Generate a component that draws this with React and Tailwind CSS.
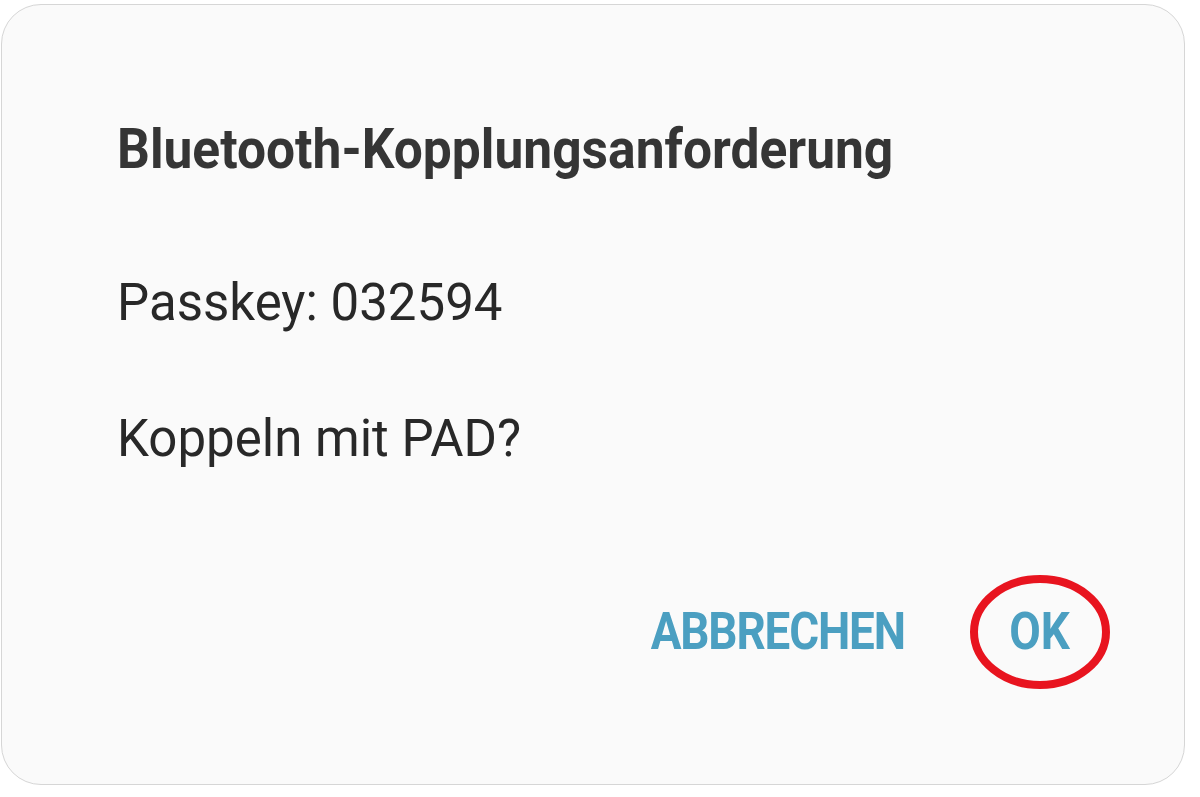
import React from "react";

const App = () => {
  return (
    <div className="w-[1200px] h-[797px] bg-white overflow-hidden pt-[4px] pl-[1px] font-['Roboto',sans-serif]">
      <div className="w-[1184px] h-[781px] bg-[#fafafa] rounded-[40px] border border-[#d6d6d6] flex flex-col pl-[115px] pr-[80px]">
        <h1 className="mt-[112px] text-[56px] leading-[64px] font-bold text-[#353535] origin-left scale-x-[0.92] whitespace-nowrap">
          Bluetooth-Kopplungsanforderung
        </h1>
        <p className="mt-[92px] text-[51px] leading-[60px] text-[#282828]">Passkey: 032594</p>
        <p className="mt-[76px] text-[51px] leading-[60px] text-[#282828]">Koppeln mit PAD?</p>
        <div className="mt-[133px] flex items-center justify-end gap-[100px] pr-[30px]">
          <button className="text-[52px] leading-[60px] font-bold text-[#4b9fc1] origin-right scale-x-[0.88] tracking-tight">
            ABBRECHEN
          </button>
          <div className="relative">
            <button className="text-[52px] leading-[60px] font-bold text-[#4b9fc1] scale-x-[0.88]">OK</button>
            <svg
              className="absolute left-1/2 top-1/2 -translate-x-1/2 -translate-y-1/2 pointer-events-none"
              width="148"
              height="122"
              viewBox="0 0 148 122"
            >
              <ellipse cx="74" cy="61" rx="66" ry="53" fill="none" stroke="#e8141f" strokeWidth="8" />
            </svg>
          </div>
        </div>
      </div>
    </div>
  );
};

export default App;
